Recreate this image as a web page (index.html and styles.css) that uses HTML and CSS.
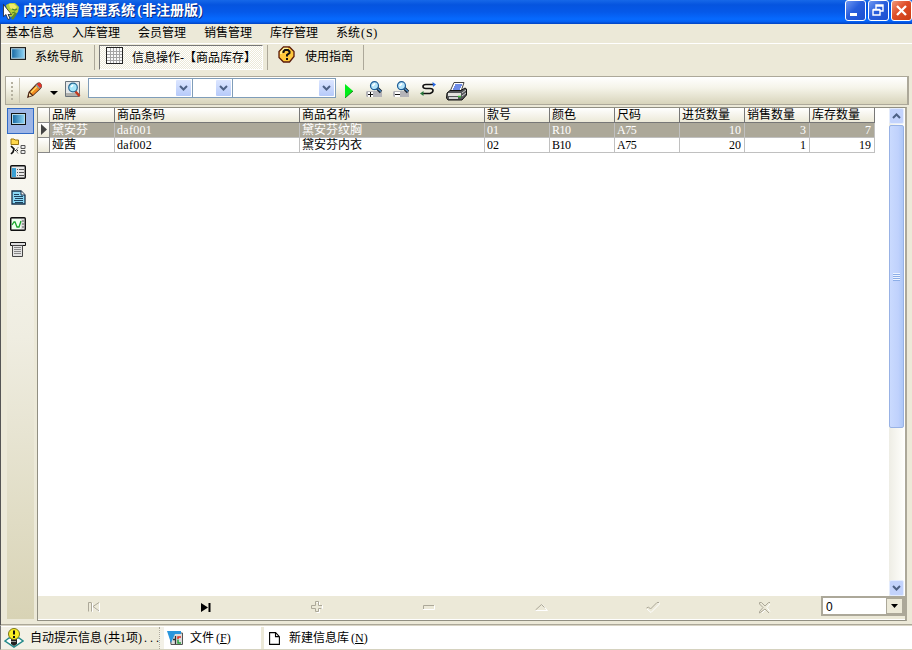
FILE: index.html
```html
<!DOCTYPE html>
<html lang="zh-CN">
<head>
<meta charset="utf-8">
<title>内衣销售管理系统</title>
<link rel="stylesheet" href="styles.css">
</head>
<body>
<svg class="defs" width="0" height="0">
  <defs>
    <linearGradient id="screen"><stop offset="0" stop-color="#1a6ba5"/><stop offset="1" stop-color="#8ad0f2"/></linearGradient>
    <symbol id="monitor" viewBox="0 0 15 12"><path d="M0 0h15v12H0z" fill="#111"/><path d="M1 1h13v10H1z" fill="#b5d8ea"/><path d="M2 2h11v8H2z" fill="url(#screen)"/></symbol>
    <symbol id="chev" viewBox="0 0 9 6"><path d="M1 1l3.5 3.5L8 1" fill="none" stroke="#4d6185" stroke-width="2"/></symbol>
    <symbol id="lens" viewBox="0 0 17 17"><path d="M1 10h14l1 1v5H1l-1-1v-4z" fill="#b4b4b8"/><path d="M2 11h5v5H2z" fill="#fff"/><path d="M10 6l5 5" stroke="#16202c" stroke-width="3.4"/><path d="M11 7l4 3.500" stroke="#4f8fc8" stroke-width="1.400"/><circle cx="8.500" cy="4.700" r="4" fill="#b4e4fa" stroke="#1e5c96" stroke-width="1.200"/><path d="M6.500 5l2.500-2.500" stroke="#fff" stroke-width="1.600"/></symbol>
  </defs>
</svg>
<div class="window">
  <header class="titlebar">
    <svg class="logo" width="16" height="18" viewBox="0 0 16 18"><path d="M3 2l4-2h5l4 4-1 5-4 4-4 1-3-6z" fill="#b5d03a"/><path d="M6 1h5l3 3-3 3-4-2z" fill="#f2ec6a"/><path d="M9 6l3 1 2-1M9 10l3-1" stroke="#4a8626" stroke-width="1.200" fill="none"/><path d="M13 10l-4 6" stroke="#5e8a28" stroke-width="2.500"/><path d="M.5 1.500v12l2.500-2 2 5 2-1-2-4h3.500z" fill="#fff" stroke="#111" stroke-width=".7"/></svg>
    <h1>内衣销售管理系统<i>(</i>非注册版<i class="end">)</i></h1>
    <div class="winbtns">
      <span class="wb"><svg width="19" height="19"><path d="M4 12h7v3H4z" fill="#fff"/></svg></span>
      <span class="wb"><svg width="19" height="19"><path d="M7 8V4h7v6h-3M7 5h7M4 9h7v5H4zM4 8.500h7" fill="none" stroke="#fff" stroke-width="1.400"/></svg></span>
      <span class="wb close"><svg width="19" height="19"><path d="M5 5l9 9M14 5l-9 9" stroke="#fff" stroke-width="2.300"/></svg></span>
    </div>
  </header>
  <nav class="menu"><span>基本信息</span><span>入库管理</span><span>会员管理</span><span>销售管理</span><span>库存管理</span><span>系统<i>(S)</i></span></nav>
  <div class="tabs">
    <div class="tab t1"><svg width="16" height="13"><use href="#monitor"/></svg><span>系统导航</span></div>
    <div class="tab t2"><svg width="17" height="17" viewBox="0 0 17 17"><path d="M0 0h17v17H0z" fill="#222"/><path d="M1 1h15v15H1z" fill="#fafafa"/><path d="M4.500 1v15M7.500 1v15M10.500 1v15M13.500 1v15M1 4.500h15M1 7.500h15M1 10.500h15M1 13.500h15" stroke="#a5a5a5"/></svg><span>信息操作-【商品库存】</span></div>
    <div class="tab t3"><svg width="17" height="17" viewBox="0 0 17 17"><path d="M5.500 1h6L16 5.500v5L11.500 16h-6L1 11.500v-6z" fill="#ffc83c" stroke="#5a1a08" stroke-width="1.300"/><path d="M3 8V6l3-3.500h4" fill="none" stroke="#fff3a0" stroke-width="1.500"/><path d="M5.500 7V5.500L7 4h3l1.500 1.500V7L9 9v1.500M9 12v2" fill="none" stroke="#111" stroke-width="2"/></svg><span>使用指南</span></div>
  </div>
  <div class="toolbar">
    <span class="grip"><svg width="2" height="18"><path d="M0 0h2v2H0zM0 4h2v2H0zM0 8h2v2H0zM0 12h2v2H0zM0 16h2v2H0z" fill="#b5b1a0"/></svg></span>
    <svg class="pencil" width="17" height="17" viewBox="0 0 17 17"><path d="M1 16l1.500-6L10 2l2-1.500h2L16 3v2l-1.500 2L7 14z" fill="#4c2412"/><path d="M4 10l6-6.500L13.500 7 7 13z" fill="#f28c22"/><path d="M5 10.500l6-6" stroke="#ffe06a" stroke-width="1.300"/><path d="M9.500 3.500l2-2H14L15.500 3v2l-2 2z" fill="#8fa0a0"/><path d="M11 2.500L12.500 1H14l1.500 2v1.500L14 6z" fill="#e93124"/><path d="M3 11l3 2.500-3 1z" fill="#f8dfa8"/></svg>
    <svg class="down" width="8" height="4"><path d="M0 0h8L4 4z" fill="#000"/></svg>
    <svg class="preview" width="16" height="17" viewBox="0 0 16 17"><path d="M.5.500h14v15H.5z" fill="#e4e8ea" stroke="#68727a"/><path d="M1 13.500h13" stroke="#b0b0ac" stroke-width="3"/><path d="M10 10l4.500 5" stroke="#c43a20" stroke-width="2.500"/><circle cx="8" cy="6.500" r="4.300" fill="#a8e8fb" stroke="#276b95" stroke-width="1.200"/><path d="M6 6l2-2" stroke="#fff" stroke-width="1.500"/></svg>
    <div class="combo c1"><b><svg width="9" height="6"><use href="#chev"/></svg></b></div>
    <div class="combo c2"><b><svg width="9" height="6"><use href="#chev"/></svg></b></div>
    <div class="combo c3"><b><svg width="9" height="6"><use href="#chev"/></svg></b></div>
    <svg class="run" width="9" height="14"><path d="M0 0l8 7-8 7z" fill="#00ed18"/><path d="M0 14l8-7" stroke="#168719"/></svg>
    <svg class="zin" width="17" height="17" viewBox="0 0 17 17"><use href="#lens"/><path d="M2 13.500h5M4.500 11v5" stroke="#111"/></svg>
    <svg class="zout" width="17" height="17" viewBox="0 0 17 17"><use href="#lens"/><path d="M2 13.500h5" stroke="#111"/></svg>
    <svg class="swap" width="16" height="14" viewBox="0 0 16 14"><path d="M14 2.500H6Q3 2.500 3 4.500T6 6.500H10Q13 6.500 13 8.500T10 11.500H2" fill="none" stroke="#111" stroke-width="1.600"/><path d="M12.500 0L16 2.500l-3 2.500z" fill="#2467e4"/><path d="M3.500 9L0 11.500 3.500 14z" fill="#26773a"/></svg>
    <svg class="printer" width="21" height="19" viewBox="0 0 21 19"><path d="M4 9.500L8 .5h10l-3 9z" fill="#fff" stroke="#444"/><path d="M9 3h7M8 5h7M7 7h7" stroke="#3f67e0" stroke-width="1.300"/><path d="M1 11l3-2.500h11L19 6l1.500 1v6L16 18H2l-1.500-2z" fill="#55575a" stroke="#111"/><path d="M2 11h13v3H2z" fill="#e3e3df"/><path d="M3 16h9" stroke="#fff" stroke-width="1.500"/><path d="M16 11l4-3M16 14l4-3" stroke="#ccc"/><path d="M12 14.500h3" stroke="#3bc53b" stroke-width="1.500"/></svg>
  </div>
  <main class="body">
    <aside class="side">
      <span class="sel"><svg width="15" height="12"><use href="#monitor"/></svg></span>
      <span><svg width="16" height="17" viewBox="0 0 16 17"><path d="M1 1h3l1 1h3.500v4.500H1z" fill="#ffd84a" stroke="#9a7510"/><path d="M1 8l3 3-1 3-2 2" fill="none" stroke="#111" stroke-width="1.700"/><path d="M5 12.500h4M8 9.500l-2 3 2 3" fill="none" stroke="#222" stroke-dasharray="1 1"/><path d="M11 7.500h4v3h-4zM11 12.500h4v3h-4z" fill="#eee" stroke="#555"/></svg></span>
      <span><svg width="16" height="14" viewBox="0 0 16 14"><rect x=".7" y=".7" width="14.600" height="12.600" rx="1" fill="#e8e8e8" stroke="#111" stroke-width="1.400"/><path d="M2 3h4v9H2z" fill="#3aa0d4"/><path d="M7 4.500h1M9 4.500h5M7 7.500h1M9 7.500h5M7 10.500h1M9 10.500h5" stroke="#555"/></svg></span>
      <span><svg width="15" height="15" viewBox="0 0 15 15"><path d="M1 1h9l4 4v9H1z" fill="#8ad8f6" stroke="#142f48" stroke-width="1.300"/><path d="M10 1v4h4" fill="#eee" stroke="#142f48"/><path d="M3 4.500h5M3 6.500h9M4 8.500h8M3 10.500h9M4 12.500h8" stroke="#12304c" stroke-width=".9"/></svg></span>
      <span><svg width="16" height="14" viewBox="0 0 16 14"><rect x=".7" y=".7" width="14.600" height="12.600" rx="1" fill="#ddd" stroke="#111" stroke-width="1.400"/><path d="M2 2h9v10H2z" fill="#effff0"/><path d="M2 8l2-3h1l2 5h2l2-6" fill="none" stroke="#1aa52c" stroke-width="1.300"/><path d="M12 4h2M12 7h2M12 10h2" stroke="#555"/></svg></span>
      <span><svg width="16" height="15" viewBox="0 0 16 15"><path d="M.5.500h15v3H.5z" fill="#ddd" stroke="#111"/><path d="M2.500 3.500h10v11h-10z" fill="#e4e4e4" stroke="#444"/><path d="M4 5.500h7M4 7.500h7M4 9.500h7M4 11.500h7" stroke="#888"/></svg></span>
    </aside>
    <section class="frame">
      <div class="view">
        <div class="grid">
          <div class="row head"><span></span><span>品牌</span><span>商品条码</span><span>商品名称</span><span>款号</span><span>颜色</span><span>尺码</span><span>进货数量</span><span>销售数量</span><span>库存数量</span></div>
          <div class="row on"><span><svg width="6" height="11"><path d="M0 0l6 5.500L0 11z" fill="#444"/></svg></span><span>黛安芬</span><span class="code">daf001</span><span>黛安芬纹胸</span><span>01</span><span class="narrow">R10</span><span class="narrow">A75</span><span>10</span><span>3</span><span>7</span></div>
          <div class="row"><span></span><span>娅茜</span><span class="code">daf002</span><span>黛安芬内衣</span><span>02</span><span class="narrow">B10</span><span class="narrow">A75</span><span>20</span><span>1</span><span>19</span></div>
        </div>
        <div class="scroll">
          <span class="arrow up"><svg width="9" height="6"><use href="#chev"/></svg></span>
          <span class="thumb"><i></i></span>
          <span class="track"></span>
          <span class="arrow"><svg width="9" height="6"><use href="#chev"/></svg></span>
        </div>
      </div>
      <footer class="record">
        <div class="navs">
          <span><svg class="off" width="12" height="10"><path class="lit" d="M4.500 1v9M11.500 1v9L6 5.500"/><path d="M3 .5H.5v9M3.500.500v9M11 .5L5 4.500 11 9" fill="none"/></svg></span>
          <span><svg width="12" height="9"><path d="M1 0l7 4.500L1 9zM8.500 0h2v9h-2z"/></svg></span>
          <span><svg class="off" width="12" height="12"><path class="lit" d="M5.500 1.500h3v3h3v3h-3v4h-3"/><path d="M4.500.500h3v4M11 4.500H7.500M4.500.500v4h-4v3h4v3h3v-3h3" fill="none"/></svg></span>
          <span><svg class="off" width="12" height="5"><path class="lit" d="M11.500.500v4H0"/><path d="M11 .5H.5V4" fill="none"/></svg></span>
          <span><svg class="off" width="13" height="7"><path class="lit" d="M7 .5l5.500 6H0"/><path d="M.5 6l6-5.500 3 3" fill="none"/></svg></span>
          <span><svg class="off" width="14" height="11"><path class="lit" d="M13 .5v2L5 10.500 1 7"/><path d="M.5 6l2-1 2 2L11 .5h2" fill="none"/></svg></span>
          <span><svg class="off" width="12" height="11"><path class="lit" d="M11 2L8 5.500l3 4M6 8l-3 3"/><path d="M.5 2V.500h2L6 4 9.500.500h1.500M.5 2L4 5.500.500 9.500V11L6 7l4 4" fill="none"/></svg></span>
        </div>
        <div class="count"><span>0</span><b><svg width="7" height="4"><path d="M0 0h7L3.500 4z"/></svg></b></div>
      </footer>
    </section>
  </main>
  <footer class="status">
    <div class="s1"><svg width="20" height="20" viewBox="0 0 20 20"><path d="M1 13l4-3h10l4 3-9 6z" fill="#fff" stroke="#258a8a" stroke-width="1.500"/><path d="M7 11h6v5l-3 2-3-2z" fill="#222"/><path d="M7 13.500h5" stroke="#999"/><circle cx="10" cy="6" r="5.500" fill="#f9ee24" stroke="#7a7418"/><path d="M10 2.500v4M10 8v2" stroke="#111" stroke-width="2"/></svg><span>自动提示信息<i>(共1项)</i><em>...</em></span></div>
    <div class="s2"><svg width="16" height="14" viewBox="0 0 16 14"><path d="M3 2h12.500v11.500H4z" fill="#ddd" stroke="#555"/><path d="M0 0h14v3H8L4 12z" fill="#2a96dc"/><path d="M8.500 5v8M6 8.500h2" stroke="#333" fill="none" stroke-width="1.300"/><path d="M14 6h-3v2" stroke="#e02d22" stroke-width="1.500" fill="none"/><path d="M11 8.500V12h3" stroke="#28a13d" stroke-width="1.500" fill="none"/></svg><span>文件<i>(<u>F</u>)</i></span></div>
    <div class="s3"><svg width="11" height="13" viewBox="0 0 11 13"><path d="M.6.600h6l3.800 4v7.800H.6zM6.500.600v4h4" fill="#fff" stroke="#000" stroke-width="1.100"/></svg><span>新建信息库<i>(<u>N</u>)</i></span></div>
  </footer>
</div>
</body>
</html>
```

FILE: styles.css
```css
* { box-sizing: border-box; }
body { margin: 0; width: 912px; height: 650px; overflow: hidden; background: #ece9d8; color: #000; font: 12px/14px "Liberation Serif", "Noto Sans CJK SC", serif; }
svg { display: block; flex: none; }
.defs { position: absolute; }
i, em { font-style: normal; }
.window { display: flex; flex-direction: column; height: 650px; background: linear-gradient(#555, #555) 0 24px / 1px 100% no-repeat; }
.titlebar { display: flex; height: 24px; flex: none; background: linear-gradient(#1668e8, #0554df 20%, #0559e9 50%, #066aff 80%, #0560f2 90%, #0142c0); }
.logo { margin: 3px 0 0 3px; }
h1 { flex: 1; margin: 1px 0 0 4px; font-size: 14px; line-height: 20px; font-weight: bold; color: #fff; text-shadow: 1px 1px #0a2b80; white-space: nowrap; }
h1 i { display: inline-block; width: 7px; text-align: right; }
h1 .end { text-align: left; }
.winbtns { display: flex; gap: 2px; }
.wb { width: 21px; height: 21px; border: 1px solid #fff; border-radius: 3px; background: linear-gradient(135deg, #7098f2, #285edc 45%, #1b4fd0); }
.close { background: linear-gradient(135deg, #f09a7c, #df4e28 45%, #c93b12); }
.menu { display: flex; gap: 18px; height: 20px; flex: none; margin-left: 1px; padding: 2px 0 0 5px; border-bottom: 1px solid #fff; }
.menu i { letter-spacing: .8px; margin-left: 1px; }
.tabs { display: flex; flex: none; height: 32px; margin-left: 1px; padding-top: 1px; }
.tab { display: flex; height: 25px; white-space: nowrap; }
.t1 { width: 94px; padding: 2px 0 0 9px; border-right: 1px solid #aca899; }
.t1 span { margin: 3px 0 0 9px; }
.t2 { width: 164px; margin-left: 4px; padding: 1px 0 0 6px; border: 1px solid #fff; border-top-color: #777; border-left-color: #777; background: repeating-conic-gradient(#ece9d8 0 25%, #fff 0 50%) 0 0 / 2px 2px; }
.t2 span { margin: 4px 0 0 9px; }
.t3 { width: 97px; margin-left: 4px; padding: 1px 0 0 10px; border: solid #aca899; border-width: 0 1px; }
.t3 span { margin: 4px 0 0 10px; }
.toolbar { display: flex; flex: none; width: 904px; height: 29px; margin-left: 5px; border: 1px solid #aca899; border-right-width: 2px; background: linear-gradient(#fff, #f5f4e9 40%, #d8d4bb); }
.grip { width: 14px; height: 25px; margin-top: 1px; padding: 4px 0 0 5px; border-right: 1px solid #c8c4b2; }
.pencil { margin: 5px 0 0 6px; }
.down { margin: 14px 0 0 7px; }
.preview { margin: 4px 0 0 7px; }
.combo { display: flex; justify-content: flex-end; height: 20px; margin-top: 1px; padding: 1px; border: 1px solid #7f9db9; background: #fff; }
.combo b { display: grid; place-items: center; width: 15px; height: 16px; border-radius: 1px; background: linear-gradient(#dce6ff, #b6cafa); }
.c1 { width: 105px; margin-left: 7px; }
.c2 { width: 40px; border-left: 0; }
.c3 { width: 103px; border-left: 0; }
.run { margin: 7px 0 0 9px; }
.zin { margin: 4px 0 0 12px; }
.zout { margin: 4px 0 0 10px; }
.swap { margin: 5px 0 0 10px; }
.printer { margin: 5px 0 0 10px; }
.body { display: flex; height: 520px; flex: none; margin-left: 1px; padding: 2px 0 0 6px; border-bottom: 1px solid #aca899; }
.side { width: 27px; height: 511px; margin-top: 1px; display: flex; flex-direction: column; background: linear-gradient(#fbfaf5, #efede1 45%, #d8d3b5); }
.side span { display: grid; place-items: center; height: 25.800px; padding: 0 5px 1px 0; }
.side .sel { border: 1px solid #316ac5; background: #9db5e6; padding: 0 5px 4px 0; }
.frame { display: flex; flex-direction: column; width: 870px; height: 514px; margin-left: 3px; border: 1px solid #918f82; border-right: 2px solid #aca899; }
.view { display: flex; justify-content: space-between; height: 488px; padding-right: 1px; background: #fff; }
.row { display: grid; grid-template-columns: 12px 65px 185px 185px repeat(6, 65px); height: 15px; }
.row span { border-right: 1px solid #c0c0c0; border-bottom: 1px solid #c0c0c0; padding: 0 3px 0 2px; white-space: nowrap; line-height: 14px; height: 15px; overflow: hidden; }
.row span:nth-child(n+8) { text-align: right; }
.row.head span { text-align: left; background: linear-gradient(#fff, #ece9d8); border-color: #777; padding-right: 0; }
.row span:first-child { background: linear-gradient(#fff, #ece9d8); border-color: #888; padding: 1px 0 0 3px; }
.row.on span:not(:first-child) { background: #aca899; color: #fff; }
.row .code { letter-spacing: .3px; }
.row .narrow { letter-spacing: -.5px; }
.scroll { display: flex; flex-direction: column; width: 15px; height: 488px; background: linear-gradient(90deg, #eeede5, #fefefb); }
.arrow { display: grid; place-items: center; height: 16px; border: 1px solid #e4ecfd; border-radius: 2px; background: #c3d3fc; }
.up svg { transform: rotate(180deg); }
.thumb { display: grid; place-items: center; height: 303px; margin-top: 1px; border: 1px solid #98b2e5; border-radius: 2px; background: linear-gradient(90deg, #cadafe, #bfd1fc 65%, #adc7f7); }
.thumb i { width: 7px; height: 8px; background: repeating-linear-gradient(#eef4ff 0 1px, #8caee8 1px 2px); }
.track { flex: 1; }
.record { display: flex; height: 24px; background: #ece9d8; border-bottom: 1px solid #fff; }
.navs { display: grid; grid-template-columns: repeat(7, 111.8px); width: 783px; }
.navs span { display: grid; place-items: center; height: 22px; }
.off { overflow: visible; stroke: #aca899; }
.off .lit { fill: none; stroke: #fff; }
.count { display: flex; width: 84px; height: 20px; border: 2px solid #aca899; background: #fff; font-family: "Liberation Sans", sans-serif; }
.count span { flex: 1; padding: 2px 0 0 3px; }
.count b { display: grid; place-items: center; width: 17px; border: 1px solid #aca899; background: #ece9d8; }
.status { display: flex; flex: 1; padding-top: 1px; border-top: 1px solid #d8d4c5; border-bottom: 1px solid #d5d2bf; border-left: 1px solid #777; background: #fff; }
.status div { display: flex; height: 22px; align-items: center; white-space: nowrap; }
.status i { margin-left: 2px; }
.status em { letter-spacing: 3px; margin-left: 2px; }
.s1 { width: 159px; padding-left: 3px; background: linear-gradient(90deg, #f4f2e8, #ece9d8); border-right: 1px dotted #aca899; }
.s1 span { margin-left: 6px; }
.s2 { width: 104px; padding-left: 3px; border-left: 4px solid #f3f1e7; border-right: 3px solid #ece9d8; }
.s2 span { margin-left: 7px; }
.s3 { padding-left: 5px; }
.s3 span { margin-left: 9px; }
```
